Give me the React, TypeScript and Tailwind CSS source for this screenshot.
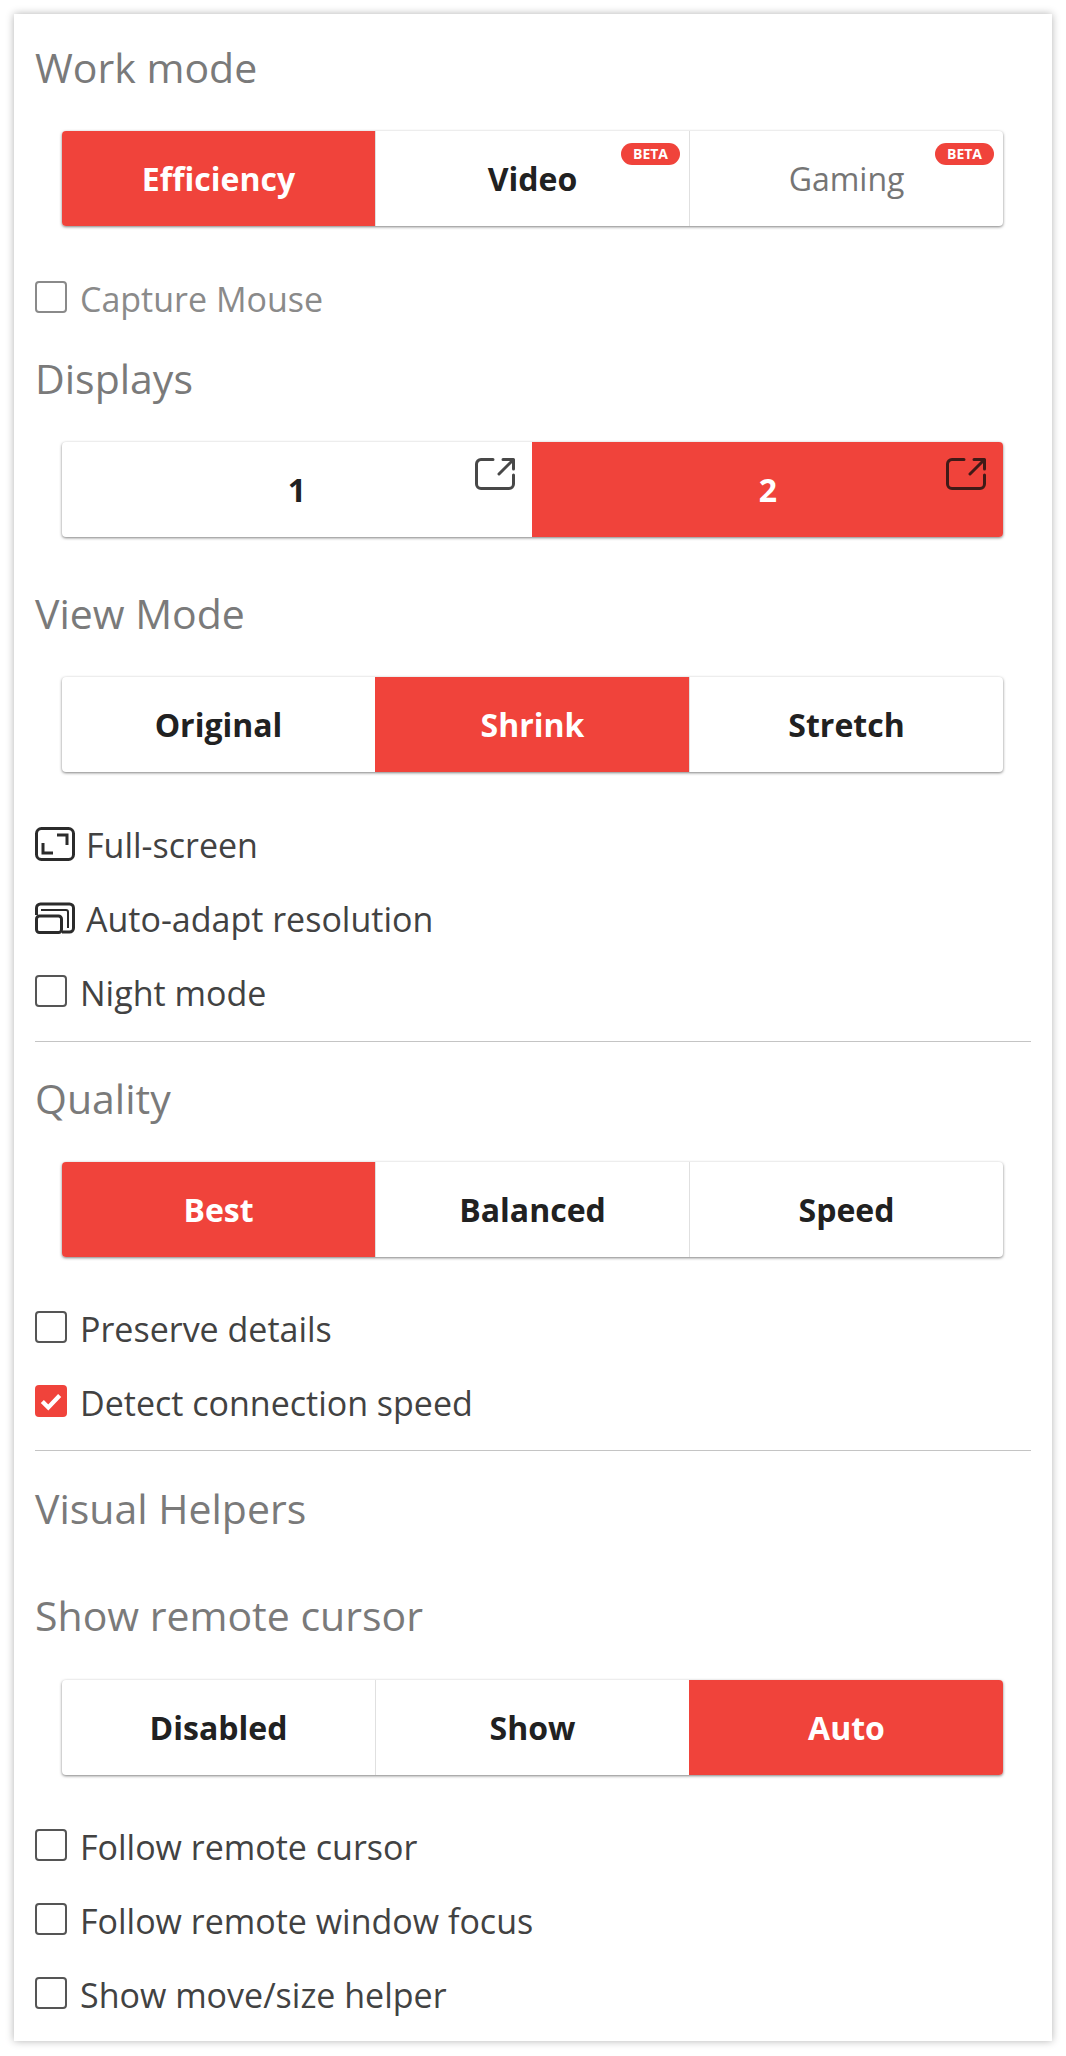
import React from "react";

const font = { fontFamily: '"Open Sans", "Noto Sans", sans-serif' };

function Title({ children, className = "" }: { children: React.ReactNode; className?: string }) {
  return <div className={"h-[48px] text-[41px] leading-[46px] text-[#7a7a7a] " + className}>{children}</div>;
}

function Beta() {
  return (
    <span className="absolute top-[12px] right-[9px] h-[22px] w-[59px] rounded-full bg-[#f0433b] text-white text-[14px] font-bold leading-[22px] text-center">
      BETA
    </span>
  );
}

function ExtIcon({ dark }: { dark?: boolean }) {
  return (
    <svg viewBox="0 0 40 32" className={"absolute top-[16px] right-[17px] w-[40px] h-[32px] " + (dark ? "text-[#401a17]" : "text-[#484848]")} fill="none" stroke="currentColor" strokeWidth="3" strokeLinecap="round" strokeLinejoin="round">
      <path d="M18 1.500H6a4.500 4.500 0 0 0-4.500 4.500v20a4.500 4.500 0 0 0 4.500 4.500h28a4.500 4.500 0 0 0 4.500-4.500V17" />
      <path d="M24 16 L38 2 M28 1.500h10.500V11" />
    </svg>
  );
}

type Opt = { label: string; active?: boolean; beta?: boolean; muted?: boolean; ext?: boolean };

function Group({ options }: { options: Opt[] }) {
  return (
    <div className="ml-[27px] mr-[28px] h-[95px] flex rounded-[4px] overflow-hidden shadow-[0_1px_3px_rgba(0,0,0,0.5)] bg-white">
      {options.map((o, i) => (
        <div
          key={o.label}
          className={
            "relative flex-1 flex items-center justify-center text-[32px] " +
            (i > 0 ? "border-l border-[#e0e0e0] " : "") +
            (o.active
              ? "bg-[#f0433b] text-white font-bold border-transparent"
              : o.muted
              ? "text-[#757575]"
              : "text-[#212121] font-bold")
          }
        >
          {o.label}
          {o.beta && <Beta />}
          {o.ext && <ExtIcon dark={o.active} />}
        </div>
      ))}
    </div>
  );
}

function Check({ label, checked, muted }: { label: string; checked?: boolean; muted?: boolean }) {
  return (
    <div className={"flex items-center h-[74px] text-[34px] " + (muted ? "text-[#8a8a8a]" : "text-[#424242]")}>
      {checked ? (
        <span className="w-[32px] h-[32px] mb-[4px] rounded-[4px] bg-[#f0433b] flex items-center justify-center">
          <svg viewBox="0 0 24 24" className="w-[26px] h-[26px]" fill="none" stroke="white" strokeWidth="4">
            <path d="M4 12.500l5.500 5.500L20 7" />
          </svg>
        </span>
      ) : (
        <span className={"w-[32px] h-[32px] mb-[4px] rounded-[4px] border-2 bg-white " + (muted ? "border-[#8a8a8a]" : "border-[#555]")} />
      )}
      <span className="ml-[13px]">{label}</span>
    </div>
  );
}

function IconRow({ label, icon }: { label: string; icon: React.ReactNode }) {
  return (
    <div className="flex items-center h-[74px] text-[34px] text-[#424242]">
      {icon}
      <span className="ml-[11px]">{label}</span>
    </div>
  );
}

export default function App() {
  return (
    <div className="bg-white w-[1066px] h-[2056px] pt-[14px] px-[14px]" style={font}>
      <div className="bg-white w-[1038px] h-[2027px] shadow-[0_0_8px_rgba(0,0,0,0.3)] px-[21px] pt-[30px]">
        <Title>Work mode</Title>
        <div className="mt-[39px]">
          <Group options={[{ label: "Efficiency", active: true }, { label: "Video", beta: true }, { label: "Gaming", beta: true, muted: true }]} />
        </div>
        <div className="mt-[36px]"><Check label="Capture Mouse" muted /></div>
        <Title className="mt-[19px]">Displays</Title>
        <div className="mt-[39px]">
          <Group options={[{ label: "1", ext: true }, { label: "2", active: true, ext: true }]} />
        </div>
        <Title className="mt-[53px]">View Mode</Title>
        <div className="mt-[39px]">
          <Group options={[{ label: "Original" }, { label: "Shrink", active: true }, { label: "Stretch" }]} />
        </div>
        <div className="mt-[36px]">
          <IconRow
            label="Full-screen"
            icon={
              <svg viewBox="0 0 40 34" className="w-[40px] h-[34px] mb-[3px]" fill="none" stroke="#2b2b2b" strokeWidth="3">
                <rect x="1.500" y="1.500" width="37" height="31" rx="5" />
                <path d="M8 16v10h10M32 18V8H22" />
              </svg>
            }
          />
          <IconRow
            label="Auto-adapt resolution"
            icon={
              <svg viewBox="0 0 40 32" className="w-[40px] h-[32px] mb-[3px]" fill="none" stroke="#2b2b2b" strokeWidth="3">
                <path d="M1.500 13V6a4 4 0 0 1 4-4h29a4 4 0 0 1 4 4v20a4 4 0 0 1-4 4H27" />
                <rect x="1.500" y="14" width="25" height="16.500" rx="3" />
                <path d="M6 8h25a2 2 0 0 1 2 2v16" strokeWidth="2" />
              </svg>
            }
          />
          <Check label="Night mode" />
        </div>
        <div className="h-px bg-[#c4c4c4] mt-[11px]" />
        <Title className="mt-[33px]">Quality</Title>
        <div className="mt-[39px]">
          <Group options={[{ label: "Best", active: true }, { label: "Balanced" }, { label: "Speed" }]} />
        </div>
        <div className="mt-[35px]">
          <Check label="Preserve details" />
          <Check label="Detect connection speed" checked />
        </div>
        <div className="h-px bg-[#c4c4c4] mt-[10px]" />
        <Title className="mt-[34px]">Visual Helpers</Title>
        <Title className="mt-[59px]">Show remote cursor</Title>
        <div className="mt-[40px]">
          <Group options={[{ label: "Disabled" }, { label: "Show" }, { label: "Auto", active: true }]} />
        </div>
        <div className="mt-[35px]">
          <Check label="Follow remote cursor" />
          <Check label="Follow remote window focus" />
          <Check label="Show move/size helper" />
        </div>
      </div>
    </div>
  );
}
